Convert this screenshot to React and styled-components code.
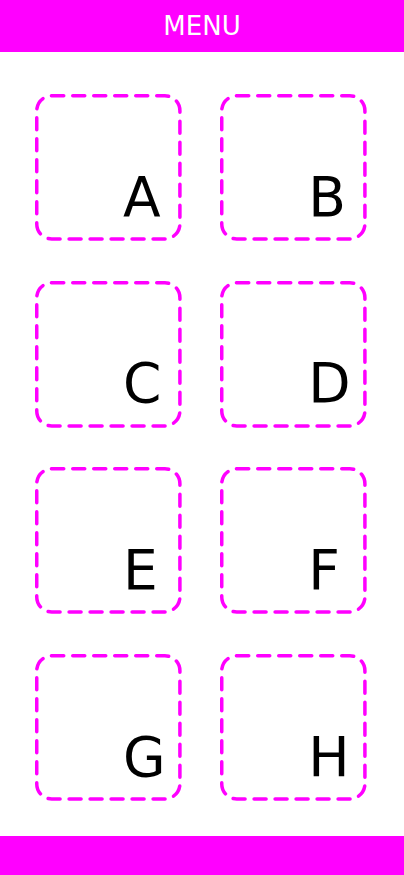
import React from 'react';
import styled, { createGlobalStyle } from 'styled-components';

const GlobalStyle = createGlobalStyle`
    html, body {
        margin: 0;
        padding: 0;
        background: #ffffff;
        font-family: "DejaVu Sans", sans-serif;
    }
`;

const Page = styled.div`
    display: flex;
    flex-direction: column;
    height: 875px;
`;

const Header = styled.header`
    height: 52px;
    background: #ff00ff;
    color: #ffffff;
    display: flex;
    align-items: center;
    justify-content: center;
    font-size: 26px;
`;

const Grid = styled.main`
    flex: 1;
    display: grid;
    grid-template-columns: repeat(2, 146.67px);
    grid-auto-rows: 146.67px;
    column-gap: 38.5px;
    row-gap: 40px;
    padding: 42px 0 0 35px;
`;

const Tile = styled.div`
    position: relative;
    box-sizing: border-box;
    display: flex;
    align-items: flex-end;
    padding: 0 0 16px 88px;
    font-size: 55px;
    line-height: 1;
    color: #000000;
`;

const Outline = styled.svg`
    position: absolute;
    inset: 0;
    width: 100%;
    height: 100%;
    overflow: visible;
    pointer-events: none;
`;

const Footer = styled.footer`
    height: 39px;
    background: #ff00ff;
`;

const letters = ['A', 'B', 'C', 'D', 'E', 'F', 'G', 'H'];

function DashedBox() {
    return (
        <Outline viewBox="0 0 146.67 146.67">
            <rect
                x="1.75"
                y="1.75"
                width="143.17"
                height="143.17"
                rx="15"
                fill="none"
                stroke="#ff00ff"
                strokeWidth="3.5"
                strokeDasharray="12 9"
                strokeLinecap="round"
            />
        </Outline>
    );
}

export default function App() {
    return (
        <Page>
            <GlobalStyle />
            <Header>MENU</Header>
            <Grid>
                {letters.map((l) => (
                    <Tile key={l}>
                        <DashedBox />
                        {l}
                    </Tile>
                ))}
            </Grid>
            <Footer />
        </Page>
    );
}
